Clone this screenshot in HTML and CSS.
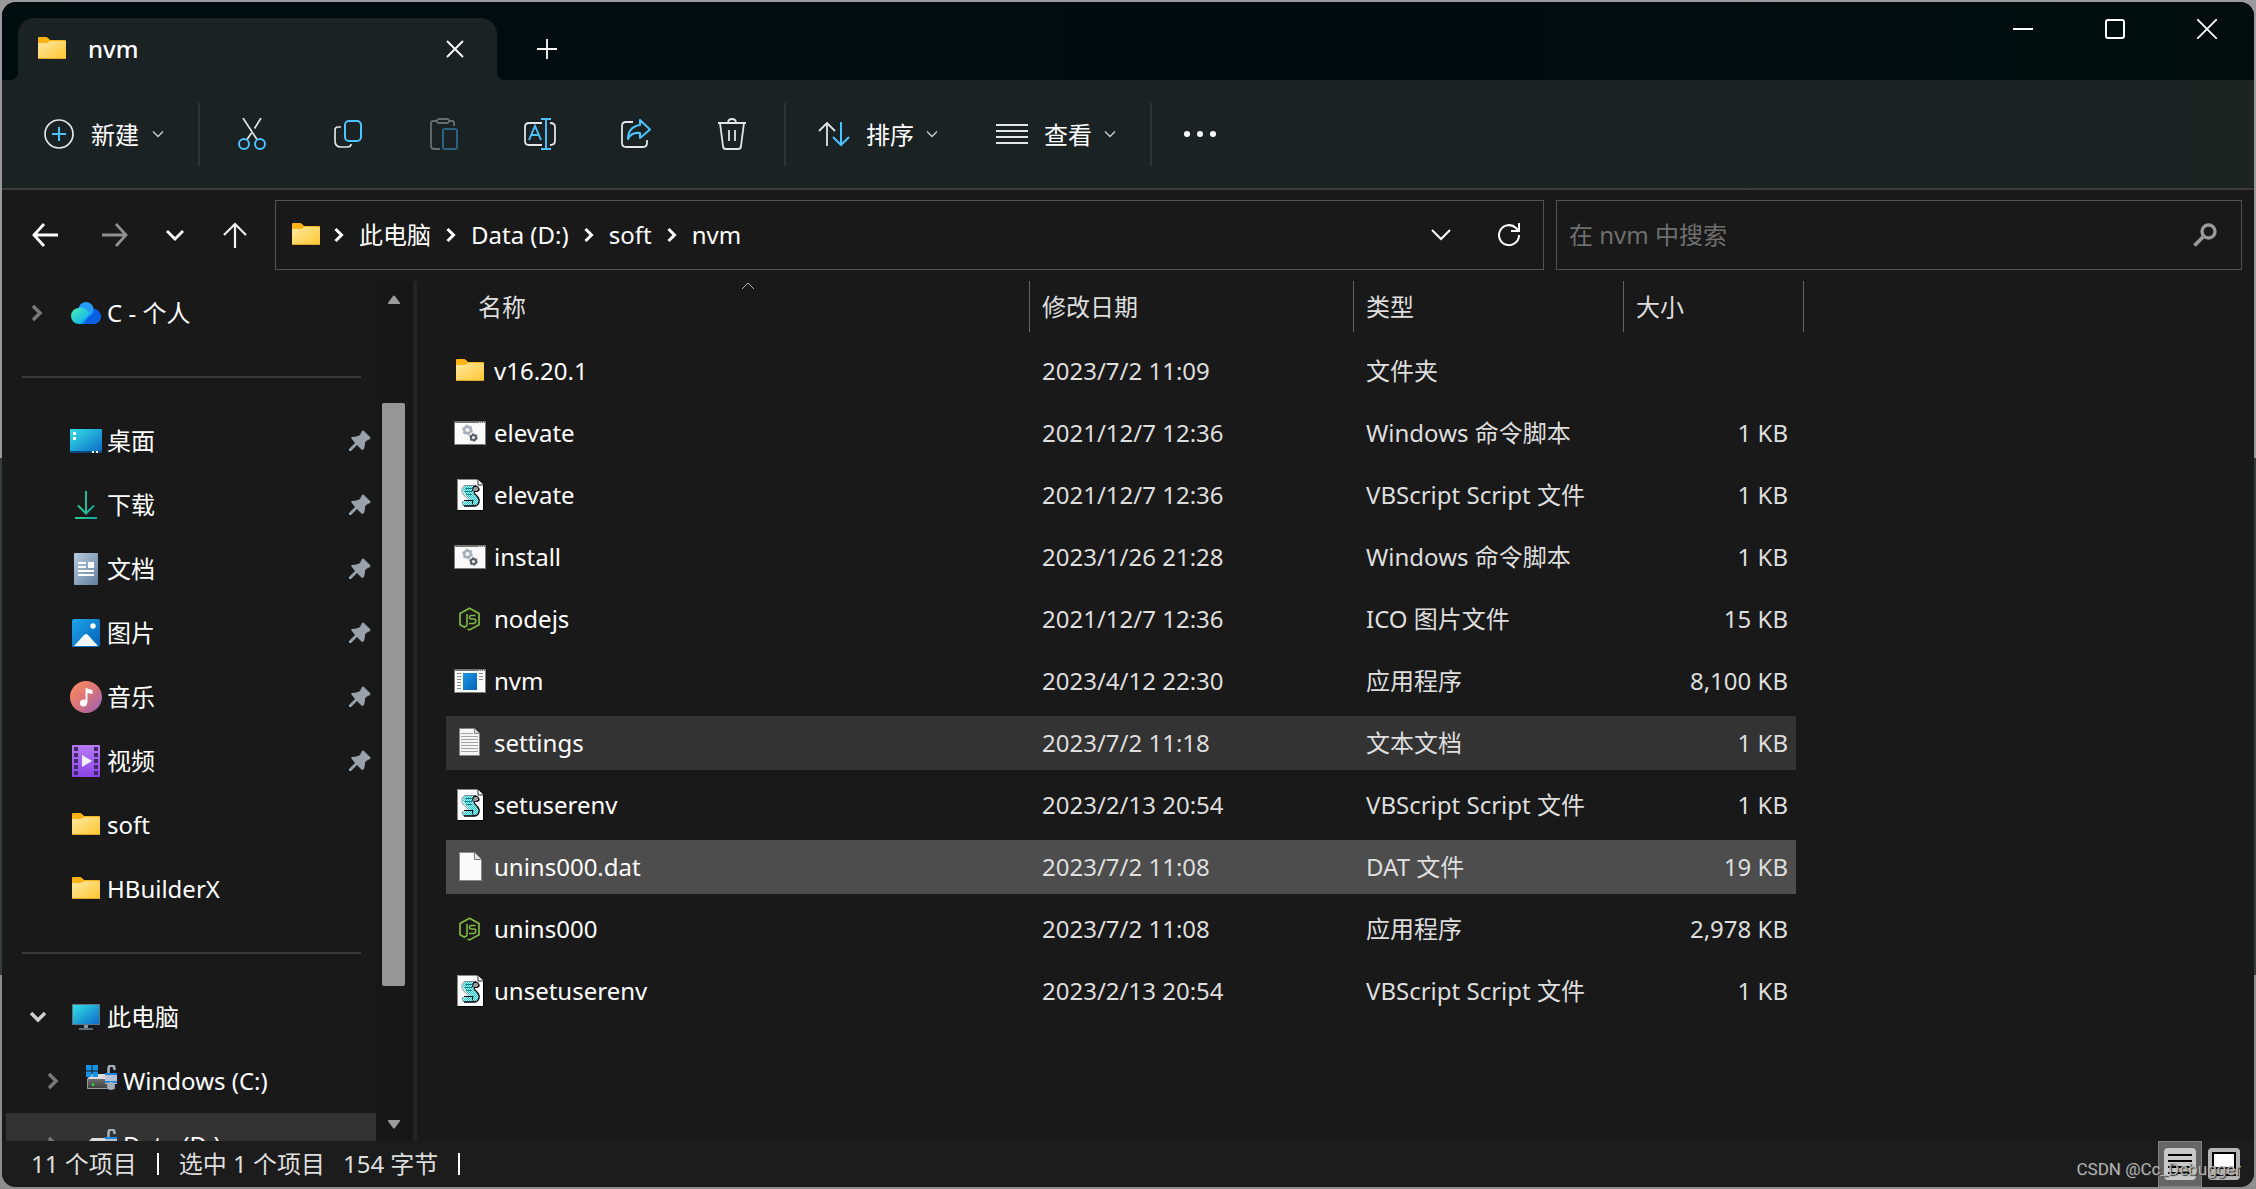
FILE: index.html
```html
<!DOCTYPE html>
<html lang="zh-CN">
<head>
<meta charset="utf-8">
<title>nvm</title>
<link rel="stylesheet" href="styles.css">
</head>
<body>
<svg class="sprite" aria-hidden="true">
  <defs>
    <linearGradient id="g-folder" x1="0" y1="0" x2="1" y2="1"><stop offset="0" stop-color="#ffe9a2"/><stop offset="1" stop-color="#fec62f"/></linearGradient>
    <linearGradient id="g-desk" x1="0" y1="0" x2="1" y2="1"><stop offset="0" stop-color="#34e0e6"/><stop offset="1" stop-color="#0b69c7"/></linearGradient>
    <linearGradient id="g-down" x1="0" y1="0" x2="1" y2="0"><stop offset="0" stop-color="#2fc98c"/><stop offset="1" stop-color="#12a8a4"/></linearGradient>
    <linearGradient id="g-doc" x1="0" y1="0" x2="1" y2="1"><stop offset="0" stop-color="#b9cbdf"/><stop offset="1" stop-color="#617f9e"/></linearGradient>
    <linearGradient id="g-pic" x1="0" y1="0" x2="1" y2="1"><stop offset="0" stop-color="#1fa5ec"/><stop offset="1" stop-color="#0560b4"/></linearGradient>
    <linearGradient id="g-music" x1="0" y1="0" x2="1" y2="1"><stop offset="0.1" stop-color="#f58a62"/><stop offset="0.5" stop-color="#da7379"/><stop offset="1" stop-color="#9561bd"/></linearGradient>
    <linearGradient id="g-video" x1="0" y1="0" x2="0" y2="1"><stop offset="0" stop-color="#b67bf3"/><stop offset="1" stop-color="#8a45e8"/></linearGradient>
    <linearGradient id="g-cl1" x1="0" y1="0" x2="1" y2="1"><stop offset="0" stop-color="#49f0b0"/><stop offset="1" stop-color="#0aa5fb"/></linearGradient>
    <linearGradient id="g-app" x1="0" y1="0" x2="1" y2="1"><stop offset="0" stop-color="#1a96e2"/><stop offset="1" stop-color="#0862b6"/></linearGradient>
    <linearGradient id="g-drive" x1="0" y1="0" x2="0" y2="1"><stop offset="0" stop-color="#6b6b6b"/><stop offset="1" stop-color="#3e3e3e"/></linearGradient>
    <pattern id="p-cyan" width="2" height="2" patternUnits="userSpaceOnUse"><rect width="2" height="2" fill="#d9ffff"/><rect width="1" height="1" fill="#00d5dc"/><rect x="1" y="1" width="1" height="1" fill="#00d5dc"/></pattern>
  </defs>
  <symbol id="i-folder" viewBox="0 0 32 32"><path d="M2 5q0-1 1-1h7q1 0 2 1l2 2h15q1 0 1 1v8H2z" fill="#fbb414"/><path d="M2 10h9q1 0 2-1l1-1h15q1 0 1 1v16q0 1-1 1H3q-1 0-1-1z" fill="url(#g-folder)"/><path d="M2 25h28q0 1-1 1H3q-1 0-1-1z" fill="#e5a52a"/></symbol>
  <symbol id="i-cloud" viewBox="0 0 32 32"><path d="M15 19l7-7a7.500 7.500 0 0 1 3 15H9z" fill="#0a5fe0"/><circle cx="16" cy="12.500" r="7.500" fill="#249dfc"/><path d="M9 11q5-1 11 5l-9 11H9a8 8 0 0 1 0-16z" fill="url(#g-cl1)"/><path d="M19 17l3-2-9 12h-3z" fill="#0aa5fb"/></symbol>
  <symbol id="i-desktop" viewBox="0 0 32 32"><rect y="4" width="32" height="24" rx="1" fill="url(#g-desk)"/><path d="M0 26h32v1q0 1-1 1H1q-1 0-1-1z" fill="#0a4a80"/><path d="M3 7h3v3H3zM3 12h3v3H3zM22 26h2v2h-2zM26 26h2v2h-2z" fill="#fff"/></symbol>
  <symbol id="i-download" viewBox="0 0 32 32"><path d="M8 16.500l8 8 8-8" fill="none" stroke="url(#g-down)" stroke-width="2"/><rect x="15" y="2" width="2" height="22" fill="#21b998"/><rect x="5" y="28" width="22" height="2" fill="url(#g-down)"/></symbol>
  <symbol id="i-doc" viewBox="0 0 32 32"><rect x="4" width="24" height="32" rx="1" fill="url(#g-doc)"/><path d="M8 9h8v2H8zM8 13h8v2H8zM18 9h6v6h-6zM8 17h16v2H8zM8 21h16v2H8z" fill="#fff"/></symbol>
  <symbol id="i-picture" viewBox="0 0 32 32"><rect x="2" y="2" width="28" height="28" rx="2" fill="url(#g-pic)"/><path d="M4 29L14 18q2-2 4 0l10 11z" fill="#f3f8ff"/><circle cx="23" cy="9" r="2.700" fill="#fff"/></symbol>
  <symbol id="i-music" viewBox="0 0 32 32"><circle cx="16" cy="16" r="16" fill="url(#g-music)"/><circle cx="13.500" cy="22" r="3.500" fill="#fff"/><path d="M15.500 7l7 2v4l-5-1v10h-2z" fill="#fff"/></symbol>
  <symbol id="i-video" viewBox="0 0 32 32"><rect x="2" width="28" height="32" rx="1" fill="url(#g-video)"/><path d="M4 2h4v4H4zM4 8h4v4H4zM4 14h4v4H4zM4 20h4v4H4zM4 26h4v4H4zM24 2h4v4h-4zM24 8h4v4h-4zM24 14h4v4h-4zM24 20h4v4h-4zM24 26h4v4h-4z" fill="#43276d"/><path d="M12 10l10 6-10 6z" fill="#f4effc"/></symbol>
  <symbol id="i-pc" viewBox="0 0 32 32"><rect x="2" y="3" width="28" height="21" fill="#5f7383"/><rect x="3" y="4" width="26" height="19" fill="url(#g-desk)"/><path d="M14 24h4v3h-4z" fill="#8495a3"/><path d="M9 27h14v2H9z" fill="#5c6b78"/></symbol>
  <symbol id="i-drive" viewBox="0 0 32 32"><path d="M6 9h20l5 5H1z" fill="#dcdcdc"/><rect x="1" y="14" width="28" height="10" fill="url(#g-drive)"/><path d="M1.500 14v9.500H29" fill="none" stroke="#9a9a9a"/><circle cx="7" cy="19.500" r="1.300" fill="#3ce03a"/><path d="M22.500 9V4q0-3.500 3-3.500t3 3.500v1" fill="none" stroke="#a7b2bd" stroke-width="2.500"/><rect x="19" y="8" width="12" height="11" fill="#b6c3d6"/><path d="M19 8h12v2H19zM19 16h12v2H19z" fill="#1c87e0"/><circle cx="25" cy="21" r="4" fill="#a3adb8"/></symbol>
  <symbol id="i-windows" viewBox="0 0 12 12"><path d="M0 0h5.500v5.500H0zM6.500 0H12v5.500H6.500zM0 6.500h5.500V12H0zM6.500 6.500H12V12H6.500z" fill="#1793e6"/></symbol>
  <symbol id="i-pin" viewBox="0 0 22 22"><path d="M13 1q1-1 2 0l6 6q1 1 0 2-2 1-4 2l-1 2q0 3-1 6l-2 1-5-5-6 6H0v-2l6-6-4-5 1-1q3 0 6-1l2-1q1-2 2-4z" fill="#97a2aa"/></symbol>
  <symbol id="i-bat" viewBox="0 0 32 32"><rect x=".500" y="4.500" width="31" height="23" fill="#fafafa" stroke="#7b7b7b"/><rect y="4" width="32" height="2" fill="#777470"/><path d="M25 5h1v1h-1zM27 5h1v1h-1zM29 5h1v1h-1z" fill="#ddd"/><circle cx="13.500" cy="13" r="3.300" fill="none" stroke="#a5afb9" stroke-width="2.400"/><circle cx="13.500" cy="13" r="4.600" fill="none" stroke="#a5afb9" stroke-width="1.500" stroke-dasharray="2.400 2.400"/><circle cx="19.500" cy="20.500" r="2.500" fill="none" stroke="#545e66" stroke-width="2"/><circle cx="19.500" cy="20.500" r="3.600" fill="none" stroke="#545e66" stroke-width="1.300" stroke-dasharray="1.900 1.900"/></symbol>
  <symbol id="i-vbs" viewBox="0 0 32 32"><path d="M3 0h21l6 6v25H3z" fill="#fff"/><path d="M3.500 31V.500H24" fill="none" stroke="#8a8a8a"/><path d="M3 31.500h26.500V6" fill="none" stroke="#000"/><path d="M24 0v6h6z" fill="#fff" stroke="#222"/><path d="M10 7h12l-3 5q0 2 3 4l3 4q1 4-3 7H9l-1-4 5-1h4l-6-7q-4-4-1-8z" fill="url(#p-cyan)"/><path d="M10 6.500h12M10 7q-3 2-2 6 1 3 7 8M9 22q-2 3 1 5" fill="none" stroke="#7c8c8e"/><path d="M19 12q-1-4 3-5 3 1 3 4-2 2-5 1 0 3 2 4 4 4 3 7-1 4-5 4H10" fill="none" stroke="#000" stroke-width="1.300"/><path d="M20 8h3q2 2 0 3l-4 1z" fill="#9a9a9a"/><path d="M10 21.500h9q-2 3 1 5" fill="none" stroke="#000"/><path d="M11 9.500h7M11 12.500h7M12 15.500h6" stroke="#087f86"/></symbol>
  <symbol id="i-node" viewBox="0 0 32 32"><path d="M11 24.500l-5-2.800V10.500l9.500-5.200 9.500 5.200v11.200l-9.500 5.200-2-1" fill="none" stroke="#82b941" stroke-width="1.700"/><path d="M13 11v10q0 3-3 2.500M21.500 12.500H17q-1.500 0-1.500 1.700T17 16h3q1.800 0 1.800 2T20 20.500h-5" fill="none" stroke="#82b941" stroke-width="1.600"/></symbol>
  <symbol id="i-exe" viewBox="0 0 32 32"><rect x=".500" y="4.500" width="31" height="23" fill="#fafafa" stroke="#7b7b7b"/><rect y="4" width="32" height="2" fill="#777470"/><path d="M25 5h1v1h-1zM27 5h1v1h-1zM29 5h1v1h-1z" fill="#ddd"/><rect x="9" y="8" width="14" height="17" fill="url(#g-app)"/><path d="M3 8.500h4M3 11.500h4M3 14.500h4M3 17.500h4M3 20.500h4M3 23.500h4M25 8.500h4M25 11.500h4M25 14.500h4" stroke="#8b8b8b"/></symbol>
  <symbol id="i-txt" viewBox="0 0 32 32"><path d="M5.500 1.500h15l5 5v22h-20z" fill="#f5f5f5" stroke="#858585"/><path d="M20.500 1.500v5h5" fill="#ddd" stroke="#858585"/><path d="M7 6.500h12M7 9.500h17M7 12.500h17M7 15.500h17M7 18.500h17M7 21.500h17M7 24.500h17" stroke="#a3a3a3"/></symbol>
  <symbol id="i-blank" viewBox="0 0 32 32"><path d="M5.500 1.500h15l7 7v21h-22z" fill="#fafafa" stroke="#8a8a8a"/><path d="M20.500 1.500v7h7" fill="#e4e4e4" stroke="#777"/></symbol>
  <symbol id="i-chev-r" viewBox="0 0 16 16"><path d="M4.500 2l6 6-6 6" fill="none" stroke="currentColor" stroke-width="3"/></symbol>
  <symbol id="i-twist-r" viewBox="0 0 18 18"><path d="M4 2l7 7-7 7" fill="none" stroke="currentColor" stroke-width="3.500"/></symbol>
  <symbol id="i-twist-d" viewBox="0 0 18 18"><path d="M2 5l7 7 7-7" fill="none" stroke="currentColor" stroke-width="3.500"/></symbol>
  <symbol id="i-small-d" viewBox="0 0 12 12"><path d="M1 3.500l5 5 5-5" fill="none" stroke="#c9cccd" stroke-width="1.400"/></symbol>
</svg>

<main class="window">
  <header class="titlebar">
    <div class="tab">
      <svg class="icon"><use href="#i-folder"/></svg>
      <h1 class="tab-name">nvm</h1>
      <button class="tab-close" aria-label="关闭标签页"><svg width="18" height="18" viewBox="0 0 18 18"><path d="M1 1l16 16M17 1L1 17" stroke="#fff" stroke-width="1.800"/></svg></button>
    </div>
    <button class="tab-add" aria-label="新标签页"><svg width="20" height="20" viewBox="0 0 20 20"><path d="M0 10h20M10 0v20" stroke="#fff" stroke-width="1.800"/></svg></button>
    <div class="controls">
      <button aria-label="最小化"><svg width="20" height="20" viewBox="0 0 20 20"><path d="M0 10h20" stroke="#fff" stroke-width="2"/></svg></button>
      <button aria-label="最大化"><svg width="20" height="20" viewBox="0 0 20 20"><rect x="1" y="1" width="18" height="18" rx="2" fill="none" stroke="#fff" stroke-width="2"/></svg></button>
      <button aria-label="关闭"><svg width="20" height="20" viewBox="0 0 20 20"><path d="M0 0l20 20M20 0L0 20" stroke="#fff" stroke-width="1.800"/></svg></button>
    </div>
  </header>

  <div class="toolbar" role="toolbar">
    <button class="tool-text new"><svg width="30" height="30" viewBox="0 0 30 30"><circle cx="15" cy="15" r="14" fill="none" stroke="#e3e5e6" stroke-width="1.700"/><path d="M8 15h14M15 8v14" stroke="#4cc2ff" stroke-width="2"/></svg><span>新建</span><svg class="caret"><use href="#i-small-d"/></svg></button>
    <span class="divider"></span>
    <button class="tool" aria-label="剪切"><svg viewBox="0 0 32 32"><path d="M7 0l14 21.500M25 0L18.500 10.500M15.500 15L11 21.500" fill="none" stroke="#e3e5e6" stroke-width="1.700"/><circle cx="8" cy="26" r="5" fill="none" stroke="#4cc2ff" stroke-width="2"/><circle cx="24" cy="26" r="5" fill="none" stroke="#4cc2ff" stroke-width="2"/></svg></button>
    <button class="tool" aria-label="复制"><svg viewBox="0 0 32 32"><path d="M9 9H6q-3 0-3 3v11q0 6 6 6h6q4 0 4-3" fill="none" stroke="#e3e5e6" stroke-width="1.700"/><rect x="13" y="3" width="16" height="20" rx="4" fill="none" stroke="#4cc2ff" stroke-width="2"/></svg></button>
    <button class="tool" aria-label="粘贴" disabled><svg viewBox="0 0 32 32"><path d="M9 3H5q-2 0-2 2v23q0 3 3 3h6M21 3h3q2 0 2 2v3" fill="none" stroke="#686e70" stroke-width="1.800"/><rect x="9" y="1" width="12" height="4" rx="2" fill="none" stroke="#686e70" stroke-width="1.800"/><rect x="15" y="11" width="14" height="20" rx="2" fill="none" stroke="#2c6281" stroke-width="2"/></svg></button>
    <button class="tool" aria-label="重命名"><svg viewBox="0 0 32 32"><path d="M18 5H5Q1 5 1 9v14q0 4 4 4h13M26 5q5 0 5 4v14q0 4-5 4" fill="none" stroke="#e3e5e6" stroke-width="1.800"/><path d="M22 1v30M17 1h10M17 31h10M5 22l6-14 6 14M7 17h8" fill="none" stroke="#4cc2ff" stroke-width="1.900"/></svg></button>
    <button class="tool" aria-label="共享"><svg viewBox="0 0 32 32"><path d="M13 4H6Q2 4 2 8v17q0 4 4 4h17q4 0 4-4v-3" fill="none" stroke="#e3e5e6" stroke-width="1.800"/><path d="M20 2l10 9.500L20 20v-5Q11 14 8 21 8 9 20 7z" fill="none" stroke="#4cc2ff" stroke-width="2" stroke-linejoin="round"/></svg></button>
    <button class="tool" aria-label="删除"><svg viewBox="0 0 32 32"><path d="M2 5h28M12 5q0-4 4-4t4 4M4 5l3 23q0 3 3 3h12q3 0 3-3l3-23M13 12v11M19 12v11" fill="none" stroke="#e3e5e6" stroke-width="1.800"/></svg></button>
    <span class="divider"></span>
    <button class="tool-text sort"><svg width="32" height="26" viewBox="0 0 32 26"><path d="M9 25V2M1 10l8-8 8 8" fill="none" stroke="#e3e5e6" stroke-width="1.800"/><path d="M23 1v23M15 16l8 8 8-8" fill="none" stroke="#4cc2ff" stroke-width="2"/></svg><span>排序</span><svg class="caret"><use href="#i-small-d"/></svg></button>
    <button class="tool-text view"><svg width="32" height="26" viewBox="0 0 32 26"><path d="M0 4h32M0 10h32M0 16h32M0 22h32" stroke="#e3e5e6" stroke-width="2"/></svg><span>查看</span><svg class="caret"><use href="#i-small-d"/></svg></button>
    <span class="divider"></span>
    <button class="tool more" aria-label="更多"><svg viewBox="0 0 32 32"><circle cx="3" cy="16" r="3" fill="#fff"/><circle cx="16" cy="16" r="3" fill="#fff"/><circle cx="29" cy="16" r="3" fill="#fff"/></svg></button>
  </div>

  <div class="addressbar">
    <div class="history">
      <button aria-label="后退"><svg width="26" height="24" viewBox="0 0 26 24"><path d="M1 12h25M12 1L2 12l10 11" fill="none" stroke="#fff" stroke-width="2.800"/></svg></button>
      <button aria-label="前进" disabled><svg width="26" height="24" viewBox="0 0 26 24"><path d="M0 12h25M14 1l10 11-10 11" fill="none" stroke="#8f8f8f" stroke-width="2.800"/></svg></button>
      <button class="recent" aria-label="最近位置"><svg width="18" height="18" viewBox="0 0 18 18"><path d="M1 5l8 8 8-8" fill="none" stroke="#fff" stroke-width="2.800"/></svg></button>
      <button aria-label="上移"><svg width="24" height="26" viewBox="0 0 24 26"><path d="M12 26V2M1 13L12 2l11 11" fill="none" stroke="#f2f2f2" stroke-width="2.200"/></svg></button>
    </div>
    <nav class="path" aria-label="地址">
      <svg class="icon"><use href="#i-folder"/></svg>
      <svg class="sep"><use href="#i-chev-r"/></svg><a href="#">此电脑</a>
      <svg class="sep"><use href="#i-chev-r"/></svg><a href="#">Data (D:)</a>
      <svg class="sep"><use href="#i-chev-r"/></svg><a href="#">soft</a>
      <svg class="sep"><use href="#i-chev-r"/></svg><a href="#">nvm</a>
      <span class="path-tools">
        <button aria-label="以前的位置"><svg width="20" height="14" viewBox="0 0 20 14"><path d="M1 2l9 9 9-9" fill="none" stroke="#fff" stroke-width="2"/></svg></button>
        <button aria-label="刷新"><svg width="24" height="24" viewBox="0 0 24 24"><path d="M22 12A10 10 0 1 1 19 5l2 2M22 0v8h-8" fill="none" stroke="#fff" stroke-width="2"/></svg></button>
      </span>
    </nav>
    <label class="search"><input type="search" placeholder="在 nvm 中搜索" aria-label="搜索"><svg width="24" height="24" viewBox="0 0 24 24"><circle cx="15.500" cy="8.500" r="6.500" fill="none" stroke="#999" stroke-width="3.400"/><path d="M11 13L1.500 22.500" stroke="#999" stroke-width="3.800"/></svg></label>
  </div>

  <div class="content">
    <nav class="sidebar" aria-label="导航窗格">
      <ul>
        <li class="node"><svg class="twist"><use href="#i-twist-r"/></svg><svg class="icon"><use href="#i-cloud"/></svg><a href="#">C - 个人</a></li>
        <li class="rule"></li>
        <li class="node"><span class="twist"></span><svg class="icon"><use href="#i-desktop"/></svg><a href="#">桌面</a><svg class="pin"><use href="#i-pin"/></svg></li>
        <li class="node"><span class="twist"></span><svg class="icon"><use href="#i-download"/></svg><a href="#">下载</a><svg class="pin"><use href="#i-pin"/></svg></li>
        <li class="node"><span class="twist"></span><svg class="icon"><use href="#i-doc"/></svg><a href="#">文档</a><svg class="pin"><use href="#i-pin"/></svg></li>
        <li class="node"><span class="twist"></span><svg class="icon"><use href="#i-picture"/></svg><a href="#">图片</a><svg class="pin"><use href="#i-pin"/></svg></li>
        <li class="node"><span class="twist"></span><svg class="icon"><use href="#i-music"/></svg><a href="#">音乐</a><svg class="pin"><use href="#i-pin"/></svg></li>
        <li class="node"><span class="twist"></span><svg class="icon"><use href="#i-video"/></svg><a href="#">视频</a><svg class="pin"><use href="#i-pin"/></svg></li>
        <li class="node"><span class="twist"></span><svg class="icon"><use href="#i-folder"/></svg><a href="#">soft</a></li>
        <li class="node"><span class="twist"></span><svg class="icon"><use href="#i-folder"/></svg><a href="#">HBuilderX</a></li>
        <li class="rule"></li>
        <li class="node"><svg class="twist open"><use href="#i-twist-d"/></svg><svg class="icon"><use href="#i-pc"/></svg><a href="#">此电脑</a></li>
        <li class="node child"><svg class="twist"><use href="#i-twist-r"/></svg><svg class="icon"><use href="#i-drive"/><use href="#i-windows" width="12" height="12"/></svg><a href="#">Windows (C:)</a></li>
        <li class="node child current"><svg class="twist"><use href="#i-twist-r"/></svg><svg class="icon"><use href="#i-drive"/></svg><a href="#">Data (D:)</a></li>
      </ul>
      <div class="scrollbar" aria-hidden="true">
        <svg width="12" height="9" viewBox="0 0 12 9"><path d="M0 8l5-7q1-1 2 0l5 7v1H0z" fill="#9b9b9b"/></svg>
        <div class="track"><div class="thumb"></div></div>
        <svg width="12" height="9" viewBox="0 0 12 9"><path d="M0 1l5 7q1 1 2 0l5-7V0H0z" fill="#9b9b9b"/></svg>
      </div>
    </nav>
    <section class="files">
      <table>
        <colgroup><col class="c-name"><col class="c-date"><col class="c-type"><col class="c-size"></colgroup>
        <thead><tr>
          <th><button>名称</button><svg class="sorted" viewBox="0 0 14 8"><path d="M1 7l6-6 6 6" fill="none" stroke="#b5b5b5"/></svg></th>
          <th><button>修改日期</button></th><th><button>类型</button></th><th><button>大小</button></th>
        </tr></thead>
        <tbody>
          <tr><td><svg class="icon"><use href="#i-folder"/></svg>v16.20.1</td><td>2023/7/2 11:09</td><td>文件夹</td><td></td></tr>
          <tr><td><svg class="icon"><use href="#i-bat"/></svg>elevate</td><td>2021/12/7 12:36</td><td>Windows 命令脚本</td><td>1 KB</td></tr>
          <tr><td><svg class="icon"><use href="#i-vbs"/></svg>elevate</td><td>2021/12/7 12:36</td><td>VBScript Script 文件</td><td>1 KB</td></tr>
          <tr><td><svg class="icon"><use href="#i-bat"/></svg>install</td><td>2023/1/26 21:28</td><td>Windows 命令脚本</td><td>1 KB</td></tr>
          <tr><td><svg class="icon"><use href="#i-node"/></svg>nodejs</td><td>2021/12/7 12:36</td><td>ICO 图片文件</td><td>15 KB</td></tr>
          <tr><td><svg class="icon"><use href="#i-exe"/></svg>nvm</td><td>2023/4/12 22:30</td><td>应用程序</td><td>8,100 KB</td></tr>
          <tr class="selected"><td><svg class="icon"><use href="#i-txt"/></svg>settings</td><td>2023/7/2 11:18</td><td>文本文档</td><td>1 KB</td></tr>
          <tr><td><svg class="icon"><use href="#i-vbs"/></svg>setuserenv</td><td>2023/2/13 20:54</td><td>VBScript Script 文件</td><td>1 KB</td></tr>
          <tr class="hovered"><td><svg class="icon"><use href="#i-blank"/></svg>unins000.dat</td><td>2023/7/2 11:08</td><td>DAT 文件</td><td>19 KB</td></tr>
          <tr><td><svg class="icon"><use href="#i-node"/></svg>unins000</td><td>2023/7/2 11:08</td><td>应用程序</td><td>2,978 KB</td></tr>
          <tr><td><svg class="icon"><use href="#i-vbs"/></svg>unsetuserenv</td><td>2023/2/13 20:54</td><td>VBScript Script 文件</td><td>1 KB</td></tr>
        </tbody>
      </table>
    </section>
  </div>

  <footer class="status">
    <span class="count">11 个项目</span>
    <span class="picked">选中 1 个项目</span>
    <span class="size">154 字节</span>
    <div class="views">
      <button class="on" aria-label="详细信息"><svg width="32" height="32" viewBox="0 0 32 32"><rect width="32" height="32" rx="4" fill="#c9c9c9"/><path d="M4 7h24M4 13h24M4 19h24M4 25h24" stroke="#000" stroke-width="2"/></svg></button>
      <button aria-label="大图标"><svg width="32" height="32" viewBox="0 0 32 32"><rect width="32" height="32" rx="4" fill="#b5b5b5"/><rect x="5" y="5" width="22" height="15" fill="#fff" stroke="#000" stroke-width="2"/><path d="M4 27h24" stroke="#000" stroke-width="2"/></svg></button>
    </div>
  </footer>
</main>
<p class="watermark">CSDN @Cc_Debugger</p>
</body>
</html>
```
FILE: styles.css
```css
* { box-sizing: border-box; }

body {
  margin: 0;
  height: 100vh;
  padding: 2px;
  position: relative;
  background: linear-gradient(#9a9a9d 0 458px, #363c3c 458px 975px, #8d8d8e 975px);
  color: #fff;
  font: 24px/32px "Noto Sans", "Noto Sans CJK SC", sans-serif;
}

button {
  display: flex;
  align-items: center;
  justify-content: center;
  margin: 0;
  padding: 0;
  border: 0;
  background: none;
  color: inherit;
  font: inherit;
}

a { color: inherit; text-decoration: none; }
svg { flex: none; display: block; }

.sprite { position: absolute; width: 0; height: 0; }
.icon { width: 32px; height: 32px; }

.window {
  display: flex;
  flex-direction: column;
  height: 100%;
  border-radius: 14px;
  overflow: hidden;
  background: #191919;
}

/* title bar */
.titlebar {
  display: flex;
  height: 78px;
  flex: none;
  padding: 0 1px 0 16px;
  background: linear-gradient(90deg, #000d0f, #000b10 60%, #000d0c);
}

.tab {
  position: relative;
  display: flex;
  align-items: center;
  width: 479px;
  margin-top: 16px;
  padding: 0 33px 0 18px;
  border-radius: 16px 16px 0 0;
  background: #1b2224;
}

.tab::before,
.tab::after {
  content: "";
  position: absolute;
  bottom: 0;
  width: 8px;
  height: 8px;
}

.tab::before { right: 100%; background: radial-gradient(circle at 0 0, transparent 8px, #1b2224 8px); }
.tab::after { left: 100%; background: radial-gradient(circle at 100% 0, transparent 8px, #1b2224 8px); }
.tab-name { margin: 0 0 0 20px; font-size: 24px; font-weight: 500; }
.tab-close { margin-left: auto; }
.tab-add { width: 100px; padding-top: 16px; }
.controls { display: flex; margin-left: auto; }
.controls button { width: 92px; height: 54px; }

/* command bar */
.toolbar {
  display: flex;
  align-items: center;
  height: 110px;
  flex: none;
  padding-left: 42px;
  border-bottom: 2px solid #3d3a3b;
  background: linear-gradient(90deg, #1b2224 70%, #1c2321);
}

.tool-text { gap: 16px; white-space: nowrap; }
.tool-text span { padding-top: 2px; }
.tool-text .caret { width: 12px; height: 12px; margin-left: -4px; }
.divider { width: 2px; height: 63px; background: #2e3537; }
.new { gap: 17px; margin-right: 34px; }
.tool { width: 96px; }
.divider + .tool { margin-left: 4px; }
.tool + .divider { margin-left: 4px; }
.tool svg { width: 32px; height: 32px; }
.sort { margin-left: 32px; }
.view { margin: 0 34px 0 58px; }
.divider + .more { margin-left: 0; }

/* navigation row */
.addressbar {
  display: flex;
  align-items: center;
  height: 91px;
  flex: none;
  gap: 12px;
  padding: 0 12px 2px 8px;
}

.history { display: flex; width: 253px; }
.history button { width: 70px; height: 70px; flex: none; }
.history .recent { width: 50px; }
.history .recent + button { width: 70px; }

.path,
.search {
  display: flex;
  align-items: center;
  height: 70px;
  border: 1px solid #535353;
}

.path { flex: 1253 1 0; padding-left: 14px; white-space: nowrap; }
.path .sep { width: 16px; height: 16px; margin: 0 12px; }
.path .icon + .sep { margin-left: 9px; }
.path-tools { display: flex; gap: 46px; margin-left: auto; padding-right: 22px; }
.search { flex: 648 1 0; padding: 0 24px 0 12px; }
.search input {
  flex: 1;
  min-width: 0;
  padding: 0;
  border: 0;
  outline: 0;
  background: none;
  color: #fff;
  font: inherit;
}
.search input::placeholder { color: #6f6f6f; opacity: 1; }

/* body */
.content { display: flex; flex: 1; min-height: 0; overflow: hidden; }

.sidebar {
  display: flex;
  width: 415px;
  flex: none;
  padding-left: 4px;
  border-right: 4px solid #242424;
}

.sidebar ul { flex: 1; margin: 0; padding: 0; list-style: none; }
.node { display: flex; align-items: center; height: 64px; padding: 0 5px 0 23px; }
.node.child { padding-left: 39px; }
.node .twist { width: 18px; height: 18px; margin-right: 23px; flex: none; color: #777; }
.node .twist.open { color: #cfcfcf; }
.node .icon { margin-right: 5px; overflow: visible; }
.node .pin { width: 22px; height: 22px; margin-left: auto; }
.node.current { background: #333; }
.rule { display: flex; align-items: center; height: 64px; padding: 0 15px 0 16px; }
.rule::before { content: ""; flex: 1; height: 2px; background: #393939; }

.scrollbar {
  display: flex;
  flex-direction: column;
  align-items: center;
  width: 37px;
  padding: 14px 2px 12px 0;
  background: #171717;
}
.track { display: flex; flex: 1; width: 23px; padding: 99px 0 134px; }
.thumb { flex: 1; border-radius: 2px; background: #969696; }

.files { flex: 1; min-width: 0; padding-left: 29px; }

table { width: 1358px; table-layout: fixed; border-collapse: separate; border-spacing: 0; }
.c-name { width: 584px; }
.c-date { width: 324px; }
.c-type { width: 270px; }
.c-size { width: 180px; }

th { position: relative; height: 59px; padding: 0; vertical-align: top; font-weight: 400; color: #dedede; }
th button { width: 100%; height: 51px; padding-left: 12px; justify-content: flex-start; border-right: 1px solid #636363; }
th:first-child button { padding-left: 32px; }
.sorted { position: absolute; top: 0; left: 50%; width: 14px; height: 8px; margin: 1px 0 0 3px; }

td {
  height: 62px;
  padding: 0 0 0 12px;
  border: solid transparent;
  border-width: 4px 0;
  background-clip: padding-box;
  color: #dedede;
  white-space: nowrap;
}
td:first-child { padding-left: 8px; color: #fff; }
td:first-child .icon { display: inline-block; margin-right: 8px; vertical-align: top; }
td:last-child { padding-right: 8px; border-right-width: 8px; text-align: right; }
.selected td { background-color: #333; }
.hovered td { background-color: #4d4d4d; }

/* status bar */
.status {
  display: flex;
  align-items: center;
  height: 46px;
  flex: none;
  padding: 0 14px 0 29px;
  background: #1c1c1c;
  color: #dedede;
}
.count, .size { display: flex; align-items: center; }
.count::after, .size::after { content: ""; width: 2px; height: 22px; margin: 0 20px; background: #fff; }
.picked { margin-right: 18px; }
.views { display: flex; gap: 6px; align-self: stretch; margin-left: auto; }
.views .on { width: 44px; border: 1px solid #828282; background: #666; }

.watermark {
  position: absolute;
  right: 15px;
  bottom: 9px;
  margin: 0;
  color: #b4b4b4;
  font: 17px/22px Roboto, sans-serif;
  text-shadow: 1px 1px 1px #333;
}
```
